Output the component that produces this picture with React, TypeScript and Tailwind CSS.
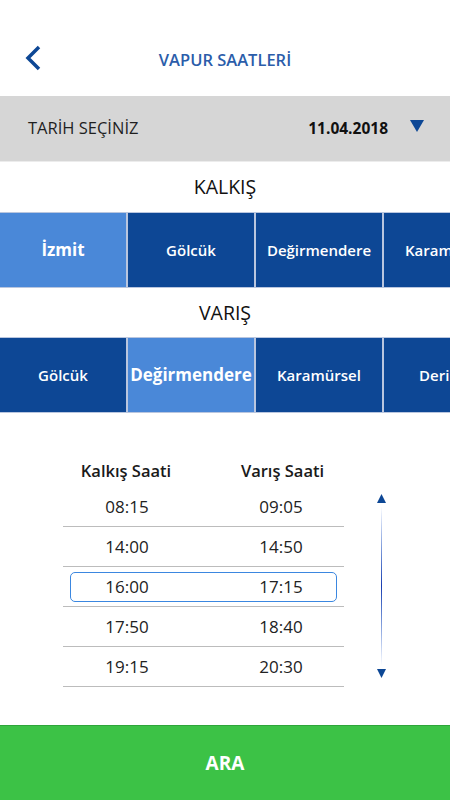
import React from 'react';

const departures = ['İzmit', 'Gölcük', 'Değirmendere', 'Karamürsel'];
const arrivals = ['Gölcük', 'Değirmendere', 'Karamürsel', 'Derince'];

const times = [
  { from: '08:15', to: '09:05' },
  { from: '14:00', to: '14:50' },
  { from: '16:00', to: '17:15' },
  { from: '17:50', to: '18:40' },
  { from: '19:15', to: '20:30' },
];

const TabRow = ({ items, active }: { items: string[]; active: number }) => (
  <div className="flex gap-[2px] bg-[#b9c6df] py-[1px] overflow-hidden">
    {items.map((name, i) => (
      <div
        key={name}
        className={`w-[126px] h-[74px] shrink-0 flex items-center justify-center text-white whitespace-nowrap ${
          i === active ? 'bg-[#4a88d8] font-bold text-[17px]' : 'bg-[#0d4795] font-semibold text-[15px]'
        }`}
      >
        {name}
      </div>
    ))}
  </div>
);

export default function App() {
  return (
    <div className="w-[450px] h-[800px] bg-white flex flex-col font-['Open_Sans',sans-serif] text-[#222]">
      {/* header */}
      <div className="h-[96px] relative flex items-center justify-center">
        <button className="absolute left-[22px] top-[44px]">
          <svg width="24" height="28" viewBox="0 0 24 28" fill="none">
            <path d="M17 3 L6 14 L17 25" stroke="#0d4795" strokeWidth="3.5" />
          </svg>
        </button>
        <h1 className="text-[16.5px] font-semibold text-[#2b5daa] mt-[24px]">VAPUR SAATLERİ</h1>
      </div>

      {/* date picker */}
      <div className="h-[66px] bg-[#d6d6d6] border-b border-[#ececec] flex items-center pl-[28px] pr-[26px]">
        <span className="text-[16.5px] text-[#1f1f1f]">TARİH SEÇİNİZ</span>
        <span className="ml-auto text-[15.5px] font-bold text-[#111]">11.04.2018</span>
        <svg className="ml-[22px] -mt-[6px]" width="14" height="12" viewBox="0 0 14 12">
          <path d="M0 0 H14 L7 12 Z" fill="#0d4795" />
        </svg>
      </div>

      <div className="h-[50px] flex items-center justify-center text-[19.5px] text-[#111]">KALKIŞ</div>
      <TabRow items={departures} active={0} />

      <div className="h-[49px] flex items-center justify-center text-[19.5px] text-[#111]">VARIŞ</div>
      <TabRow items={arrivals} active={1} />

      {/* timetable */}
      <div className="flex pl-[63px] mt-[42px]">
        <div className="w-[281px]">
          <div className="h-[32px] grid grid-cols-[126px_1fr] items-center text-[16.5px] font-semibold text-[#1a1a1a]">
            <span className="text-center">Kalkış Saati</span>
            <span className="text-center pl-[32px]">Varış Saati</span>
          </div>
          {times.map((t, i) => (
            <div key={t.from} className="h-[40px] border-b border-[#bcbcbc] pt-[5px] pb-[4px]">
              <div
                className={`h-full grid grid-cols-[112px_1fr] items-center text-[17px] mx-[7px] rounded-[5px] border ${
                  i === 2 ? 'border-[#3b87e0]' : 'border-transparent'
                }`}
              >
                <span className="text-center">{t.from}</span>
                <span className="text-center pl-[43px]">{t.to}</span>
              </div>
            </div>
          ))}
        </div>
        <div className="ml-[33px] mt-[39px] w-[9px] flex flex-col items-center">
          <svg width="9" height="9" viewBox="0 0 9 9">
            <path d="M4.5 0 L9 9 H0 Z" fill="#0d4795" />
          </svg>
          <div className="w-[1.5px] h-[160px] my-[3px] bg-gradient-to-b from-[#ffffff] via-[#1a3cb0] to-[#ffffff]" />
          <svg width="9" height="9" viewBox="0 0 9 9">
            <path d="M0 0 H9 L4.5 9 Z" fill="#0d4795" />
          </svg>
        </div>
      </div>

      <button className="mt-auto h-[75px] bg-[#3cc246] border-t border-[#2ea53a] flex items-center justify-center text-white text-[19px] font-bold">
        ARA
      </button>
    </div>
  );
}
